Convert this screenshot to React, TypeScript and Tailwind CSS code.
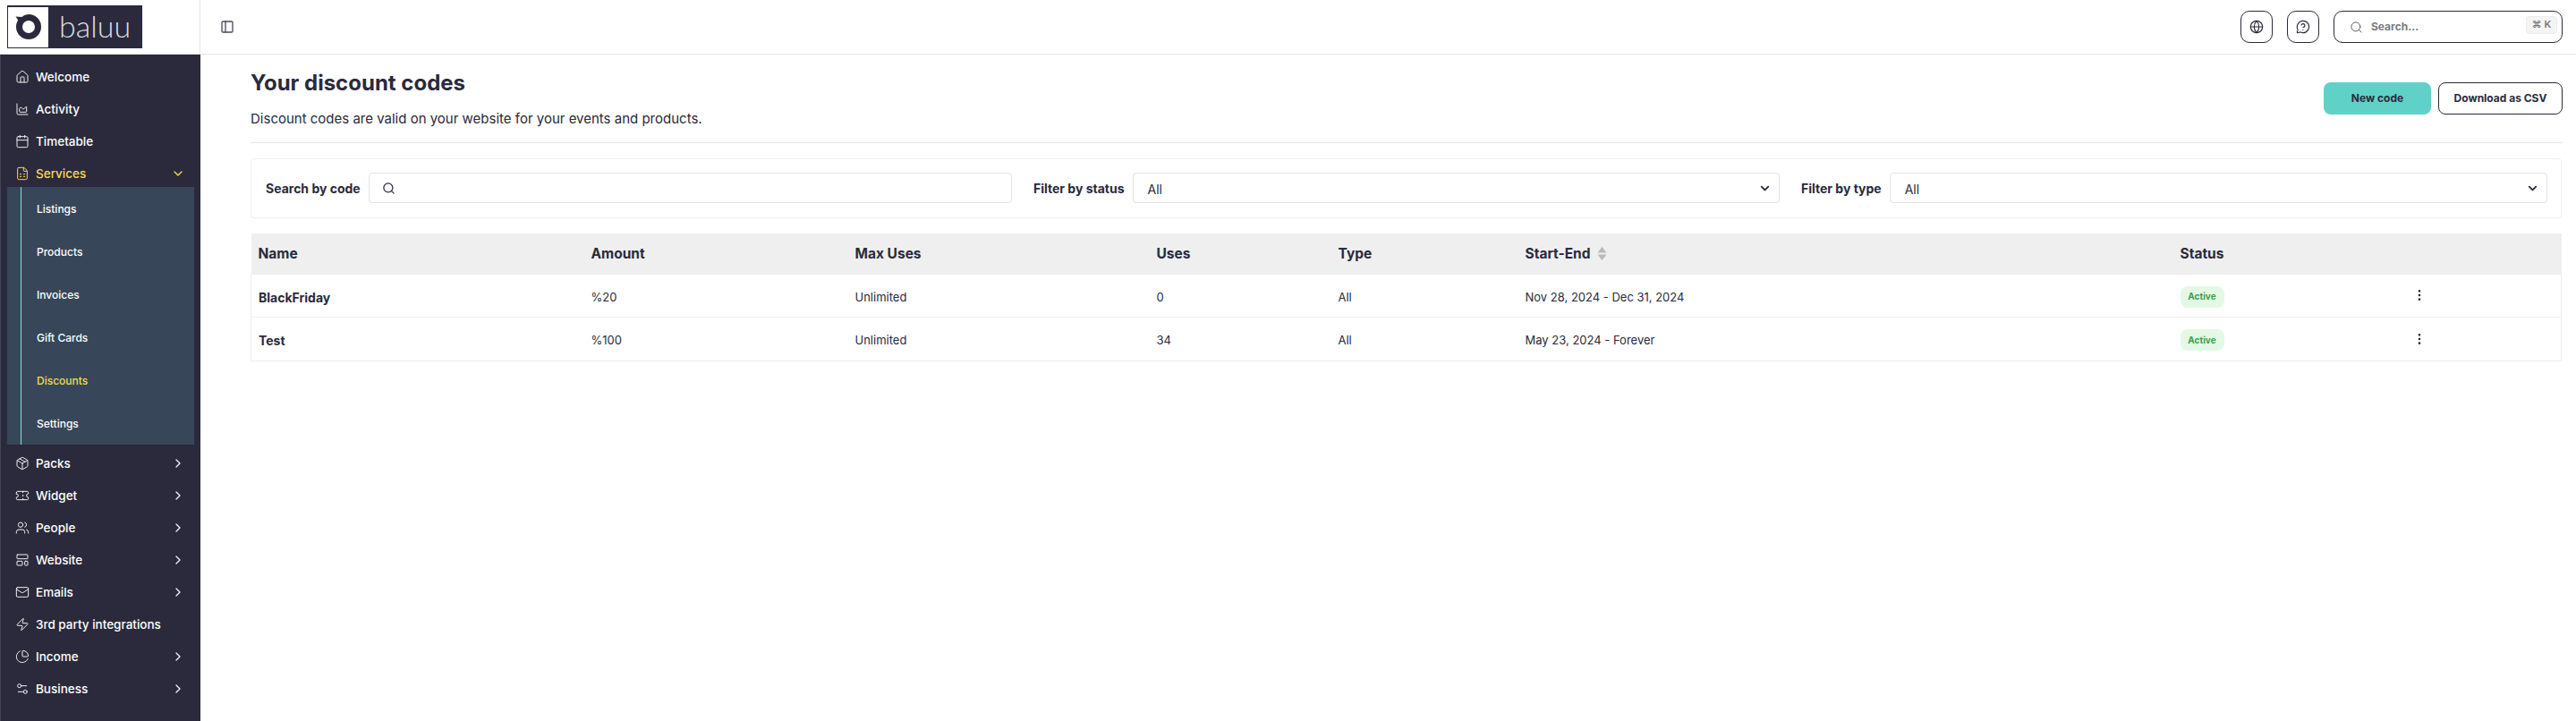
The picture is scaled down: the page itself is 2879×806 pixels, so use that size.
import {
  ChartArea,
  ChartPie,
  Calendar,
  ChevronDown,
  ChevronRight,
  EllipsisVertical,
  FileSpreadsheet,
  Globe,
  House,
  LayoutTemplate,
  Mail,
  MessageCircleQuestion,
  Package,
  PanelLeft,
  Search,
  Settings2,
  Ticket,
  Users,
  Zap,
} from "lucide-react";

const topItems = [
  { label: "Welcome", icon: House },
  { label: "Activity", icon: ChartArea },
  { label: "Timetable", icon: Calendar },
];

const bottomItems = [
  { label: "Packs", icon: Package, arrow: true },
  { label: "Widget", icon: Ticket, arrow: true },
  { label: "People", icon: Users, arrow: true },
  { label: "Website", icon: LayoutTemplate, arrow: true },
  { label: "Emails", icon: Mail, arrow: true },
  { label: "3rd party integrations", icon: Zap, arrow: false },
  { label: "Income", icon: ChartPie, arrow: true },
  { label: "Business", icon: Settings2, arrow: true },
];

const subItems = ["Listings", "Products", "Invoices", "Gift Cards", "Discounts", "Settings"];

const rows = [
  { name: "BlackFriday", amount: "%20", max: "Unlimited", uses: "0", type: "All", dates: "Nov 28, 2024 - Dec 31, 2024" },
  { name: "Test", amount: "%100", max: "Unlimited", uses: "34", type: "All", dates: "May 23, 2024 - Forever" },
];

const Logo = () => (
  <div className="flex h-[48px] w-[151px] items-center bg-[#2a2a3c] pl-px">
    <div className="flex h-[45px] w-[45px] items-center justify-center bg-white">
      <svg width="32" height="32" viewBox="0 0 32 32">
        <path d="M16 2a14 14 0 1 1-14 14c0-3 .8-5.5 2.2-7.6L1.5 4.5l6.7.4A14 14 0 0 1 16 2z" fill="#2a2a3c" />
        <circle cx="16" cy="16" r="7" fill="#fff" />
      </svg>
    </div>
    <span className="mb-[2px] ml-[12px] font-['Lato'] text-[34px] leading-none font-light text-[#dcdce2]">baluu</span>
  </div>
);

const NavRow = ({ label, icon: Icon, arrow }: { label: string; icon: typeof House; arrow?: boolean }) => (
  <div className="flex h-[36px] items-center pr-[17px] pl-[16px] text-white">
    <Icon size={16} strokeWidth={1.5} className="shrink-0 text-[#f0f0f3]" />
    <span className="ml-[7px] flex-1 text-[13.5px] font-medium">{label}</span>
    {arrow && <ChevronRight size={16} strokeWidth={2} className="text-[#f0f0f3]" />}
  </div>
);

const Sidebar = () => (
  <aside className="h-full w-[224px] shrink-0 border-l border-[#45455a] bg-[#2a2a3c] pt-[7px]">
    {topItems.map((item) => (
      <NavRow key={item.label} {...item} />
    ))}
    <div className="flex h-[36px] items-center pr-[17px] pl-[16px] text-[#f6dc4c]">
      <FileSpreadsheet size={16} strokeWidth={1.5} className="shrink-0" />
      <span className="ml-[7px] flex-1 text-[13.5px] font-medium">Services</span>
      <ChevronDown size={16} strokeWidth={2} />
    </div>
    <div className="mx-[7px] mt-[-3px] mb-[3px] bg-[#374759] pl-[15px]">
      <div className="border-l border-[#7fe0d5] pl-[17px]">
        {subItems.map((item) => (
          <div
            key={item}
            className={`flex h-[48px] items-center pt-[1px] text-[12px] font-medium ${item === "Discounts" ? "text-[#f6dc4c]" : "text-white"}`}
          >
            {item}
          </div>
        ))}
      </div>
    </div>
    {bottomItems.map((item) => (
      <NavRow key={item.label} {...item} />
    ))}
  </aside>
);

const TopBar = () => (
  <header className="flex h-[61px] shrink-0 items-center border-b border-[#e5e5e5]">
    <div className="flex h-full w-[224px] shrink-0 items-center border-r border-[#e5e5e5] pl-[8px]">
      <Logo />
    </div>
    <PanelLeft size={16} strokeWidth={2} className="ml-[22px] text-[#4b4b5c]" />
    <div className="mr-[15px] ml-auto flex items-center gap-[16px]">
      <button className="flex h-[36px] w-[36px] items-center justify-center rounded-[10px] border border-[#2a2a3c] text-[#2a2a3c]">
        <Globe size={16} strokeWidth={1.75} />
      </button>
      <button className="flex h-[36px] w-[36px] items-center justify-center rounded-[10px] border border-[#2a2a3c] text-[#2a2a3c]">
        <MessageCircleQuestion size={16} strokeWidth={1.75} />
      </button>
      <div className="flex h-[36px] w-[256px] items-center rounded-[10px] border border-[#2a2a3c] pr-[5px] pl-[17px]">
        <Search size={15} strokeWidth={1.5} className="text-[#55555f]" />
        <span className="ml-[9px] flex-1 text-[12px] font-bold text-[#7a7a80]">Search...</span>
        <span className="mb-[5px] flex h-[20px] w-[35px] items-center justify-center rounded-[4px] border border-[#ececec] bg-[#f4f4f4] text-[11px] font-semibold text-[#77777d]">
          ⌘ K
        </span>
      </div>
    </div>
  </header>
);

const Filter = ({ label, value }: { label: string; value: string }) => (
  <div className="flex items-center gap-[9px]">
    <span className="shrink-0 text-[14px] font-bold whitespace-nowrap">{label}</span>
    <div className="flex h-[34px] flex-1 items-center justify-between rounded-[4px] border border-[#e4e4e7] pr-[8px] pl-[16px] text-[14px] font-normal">
      <span className="mt-[2px]">{value}</span>
      <ChevronDown size={15} strokeWidth={3} />
    </div>
  </div>
);

const ActiveBadge = () => (
  <span className="inline-flex h-[24px] w-[49px] items-center justify-center rounded-[8px] bg-[#e3f9e5] text-[10px] font-bold text-[#3aa04e]">
    Active
  </span>
);

const DiscountTable = () => (
  <table className="mt-[17px] w-[2583px] table-fixed border-collapse text-[13px]">
    <colgroup>
      <col className="w-[372px]" />
      <col className="w-[295px]" />
      <col className="w-[337px]" />
      <col className="w-[203px]" />
      <col className="w-[209px]" />
      <col className="w-[732px]" />
      <col className="w-[267px]" />
      <col />
    </colgroup>
    <thead>
      <tr className="h-[45px] bg-[#efefef] text-left text-[15.5px] font-bold">
        <th className="pt-[1px] pl-[8px]">Name</th>
        <th className="pt-[1px] pl-[8px]">Amount</th>
        <th className="pt-[1px] pl-[8px]">Max Uses</th>
        <th className="pt-[1px] pl-[8px]">Uses</th>
        <th className="pt-[1px] pl-[8px]">Type</th>
        <th className="pt-[1px] pl-[8px]">
          <span className="flex items-center gap-[7px]">
            Start-End
            <svg width="11" height="15" viewBox="0 0 11 15" fill="#b9b9bd">
              <path d="M5.5 0 10.5 6.5H.5z" />
              <path d="M5.5 15 .5 8.5h10z" />
            </svg>
          </span>
        </th>
        <th className="pt-[1px] pl-[8px]">Status</th>
        <th />
      </tr>
    </thead>
    <tbody>
      {rows.map((row) => (
        <tr key={row.name} className="h-[48.5px] border border-[#ededed]">
          <td className="pt-[4px] pl-[8px] text-[14px] font-bold">{row.name}</td>
          <td className="pt-[4px] pl-[8px]">{row.amount}</td>
          <td className="pt-[4px] pl-[8px]">{row.max}</td>
          <td className="pt-[4px] pl-[8px]">{row.uses}</td>
          <td className="pt-[4px] pl-[8px]">{row.type}</td>
          <td className="pt-[4px] pl-[8px]">{row.dates}</td>
          <td className="pt-[3px] pl-[8px]">
            <ActiveBadge />
          </td>
          <td>
            <EllipsisVertical size={16} strokeWidth={2} />
          </td>
        </tr>
      ))}
    </tbody>
  </table>
);

export default function App() {
  return (
    <div className="flex h-screen flex-col overflow-hidden bg-white font-['Inter',sans-serif] text-[#2a2a3c]">
      <TopBar />
      <div className="flex min-h-0 flex-1">
        <Sidebar />
        <main className="min-w-0 flex-1 pt-[16px] pr-[15px] pl-[56px]">
          <div className="flex items-start justify-between border-b border-[#e5e5e5] pb-[14px]">
            <div>
              <h1 className="text-[24px] leading-[32px] font-bold">Your discount codes</h1>
              <p className="mt-[12px] text-[15px] leading-[24px]">Discount codes are valid on your website for your events and products.</p>
            </div>
            <div className="mt-[15px] flex gap-[8px]">
              <button className="h-[36px] w-[120px] rounded-[8px] bg-[#60d1c7] text-[12px] font-bold">New code</button>
              <button className="h-[36px] w-[139px] rounded-[8px] border border-[#2a2a3c] text-[12px] font-bold">Download as CSV</button>
            </div>
          </div>
          <div className="mt-[17px] grid w-[2583px] grid-cols-3 gap-x-[24px] rounded-[4px] border border-[#eeeeee] pt-[15px] pr-[15px] pb-[16px] pl-[16px]">
            <div className="flex items-center gap-[9px]">
              <span className="shrink-0 text-[14px] font-bold whitespace-nowrap">Search by code</span>
              <div className="flex h-[34px] flex-1 items-center rounded-[4px] border border-[#e4e4e7] pl-[14px]">
                <Search size={15} strokeWidth={2} />
              </div>
            </div>
            <Filter label="Filter by status" value="All" />
            <Filter label="Filter by type" value="All" />
          </div>
          <DiscountTable />
        </main>
      </div>
    </div>
  );
}
